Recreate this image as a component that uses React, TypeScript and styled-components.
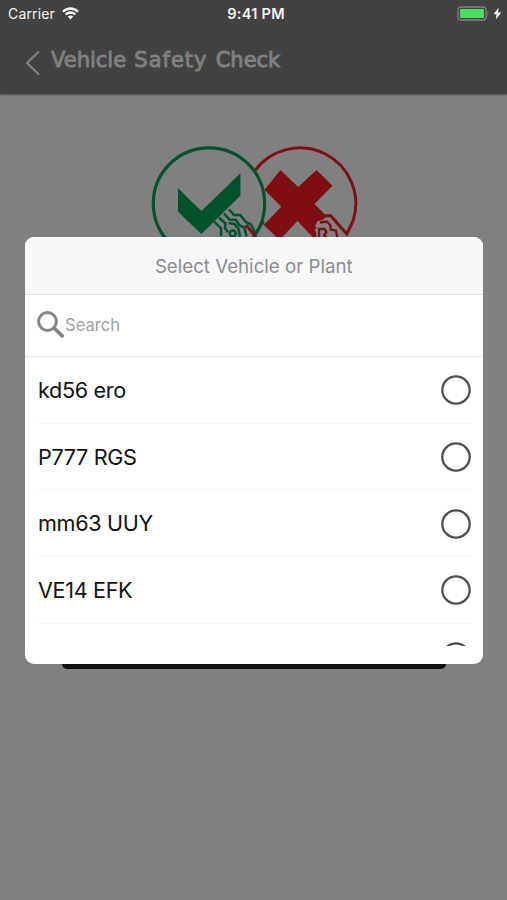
import React from "react";
import styled, { createGlobalStyle } from "styled-components";

const GlobalStyle = createGlobalStyle`
  * { box-sizing: border-box; }
  body { margin: 0; background: #808080; overflow: hidden; font-family: Inter, "Liberation Sans", sans-serif; }
`;

const Screen = styled.div`
  position: relative;
  width: 507px;
  height: 900px;
  overflow: hidden;
  background: #808080;
`;

const TopBar = styled.header`
  height: 94px;
  background: #424242;
  box-shadow: 0 1px 2px rgba(0, 0, 0, 0.4);
`;

const StatusBar = styled.div`
  display: grid;
  grid-template-columns: 1fr auto 1fr;
  align-items: center;
  height: 27px;
  padding: 0 5px 0 8px;
  color: #f4f4f4;
`;

const StatusGroup = styled.div<{ $end?: boolean }>`
  display: flex;
  align-items: center;
  gap: ${(p) => (p.$end ? "3px" : "7px")};
  justify-content: ${(p) => (p.$end ? "flex-end" : "flex-start")};
`;

const Carrier = styled.span`
  font-size: 14px;
  line-height: 18px;
  letter-spacing: 0.15px;
`;

const Clock = styled.time`
  padding-left: 2px;
  font-size: 14.5px;
  font-weight: 600;
  line-height: 18px;
  letter-spacing: 0.3px;
`;

const NavBar = styled.div`
  display: flex;
  align-items: center;
  gap: 10px;
  height: 67px;
  padding: 0 0 0 25px;
`;

const BackIcon = styled.svg`
  margin-top: 4px;
`;

const Title = styled.h1`
  margin: -2px 0 0;
  font: 400 21px/30px "DejaVu Sans", sans-serif;
  color: #808080;
  -webkit-text-stroke: 0.9px #808080;
  white-space: nowrap;
  word-spacing: 1.5px;
`;

const Word = styled.span<{ $spacing: number }>`
  letter-spacing: ${(p) => p.$spacing}px;
`;

const Content = styled.main`
  display: flex;
  flex-direction: column;
  align-items: center;
  padding-top: 50px;
`;

const SubmitButton = styled.button`
  width: 384px;
  height: 50px;
  margin-top: 355px;
  border: 0;
  border-radius: 5px;
  background: #101012;
`;

const Dialog = styled.section`
  position: absolute;
  top: 237px;
  left: 25px;
  display: flex;
  flex-direction: column;
  width: 457.5px;
  height: 427px;
  padding-bottom: 18px;
  overflow: hidden;
  border-radius: 9px;
  background: #fff;
`;

const DialogTitle = styled.h2`
  flex: none;
  height: 58px;
  margin: 0;
  border-bottom: 1px solid #e1e1e5;
  background: #f8f8fb;
  color: #8b8b90;
  font-size: 18.7px;
  font-weight: 400;
  line-height: 59px;
  text-align: center;
`;

const SearchRow = styled.label`
  display: flex;
  flex: none;
  align-items: center;
  height: 62px;
  padding: 0 0 2px 12px;
  border-bottom: 1px solid #e8e8e8;
`;

const SearchInput = styled.input`
  width: 380px;
  padding: 0;
  border: 0;
  outline: 0;
  background: transparent;
  font: 400 16.6px/24px Inter, sans-serif;
  &::placeholder { color: #a2a2a5; opacity: 1; }
`;

const List = styled.div`
  flex: 1;
  min-height: 0;
  overflow: hidden;
`;

const Option = styled.div`
  display: flex;
  align-items: center;
  justify-content: space-between;
  height: 66.7px;
  margin: 0 12px 0 13px;
  border-bottom: 1px solid #f7f7f7;
`;

const OptionLabel = styled.span`
  color: #111;
  font-size: 21.6px;
  line-height: 30px;
  letter-spacing: -0.33px;
`;

const Radio = styled.svg`
  flex: none;
  margin-top: 1px;
`;

const options = ["kd56 ero", "P777 RGS", "mm63 UUY", "VE14 EFK", ""];

const Logo = () => (
  <svg width="211" height="120" viewBox="0 0 211 120" fill="none">
    <g stroke="#7f0e13" strokeWidth="3.2">
      <path d="M174 74l3-2.2 5.5-.3 16.3 18.5 6.2-13A55.8 55.8 0 1 0 112.3 98.9" strokeWidth="3" />
      <path fill="#7f0e13" stroke="none" d="M132.5 26l17.7 17 18.3-17 16 15.7-18 18.3 12 12-4 4-5 1-3 6v12l-17-18-18 19-15.7-15 17.4-18.3-16.7-17z" />
      <path strokeWidth="2.3" d="M172 78.5l7-1 3.5 4v4l5.5 1 1.5 8M168 83l-3 2.5 2 3v6M171 94v-9h5.5l2 3-2.5 3.5 3 3" />
    </g>
    <circle cx="61" cy="59.5" r="55.7" fill="#808080" stroke="#00522b" strokeWidth="3.2" />
    <path fill="#00522b" d="M30 44.3L53.4 67l39-37.7v22.4L53.4 90 30 67.7z" />
    <g stroke="#00522b" strokeWidth="2.5">
      <path d="M81 65.5l5 5.5h6l6.5 7.5 4.5 2 4 8.5 9-11.5" />
      <path d="M76 69.5l5.5 6 6.5.5 3.5 5.5 5 2 2 9" />
      <path d="M71 73.5l6.5 6-.5 4.5 3 4M80.5 79l6 1 4 5 1.5 8" />
      <path d="M66 77.7l7 6.5v8" />
      <circle cx="84.7" cy="89.5" r="3" />
    </g>
    <path d="M98 81l10 12" stroke="#7f0e13" strokeWidth="3" />
  </svg>
);

export default function App() {
  return (
    <>
      <GlobalStyle />
      <Screen>
        <TopBar>
          <StatusBar>
            <StatusGroup>
              <Carrier>Carrier</Carrier>
              <svg width="17" height="13" viewBox="0 0 17 13" fill="none" stroke="#f4f4f4" strokeWidth="2.3">
                <path d="M1 4.7C5.2.4 11.8.4 16 4.7M3.7 7.5c2.7-2.7 6.9-2.7 9.6 0" />
                <path d="M5.7 9.6Q8.5 7.3 11.3 9.6L8.5 12.4z" fill="#f4f4f4" stroke="none" />
              </svg>
            </StatusGroup>
            <Clock>9:41 PM</Clock>
            <StatusGroup $end>
              <svg width="33" height="15" viewBox="0 0 33 15">
                <rect x="1" y="1" width="28" height="13" rx="3" fill="#424242" stroke="#828282" strokeWidth="1.3" />
                <rect x="3" y="3" width="24" height="9" rx="1" fill="#4cdc62" />
                <path d="M30.5 5v5q2-2.5 0-5" fill="#828282" />
              </svg>
              <svg width="9" height="13" viewBox="0 0 9 13">
                <path d="M5.7.5.5 7.2h3L2.8 12.5 8.4 5.5H5z" fill="#f4f4f4" />
              </svg>
            </StatusGroup>
          </StatusBar>
          <NavBar>
            <BackIcon width="16" height="26" viewBox="0 0 16 26" fill="none" stroke="#858585" strokeWidth="2">
              <path d="M14 1.5 2 13l12 11.5" />
            </BackIcon>
            <Title>
              <Word $spacing={0}>Vehicle</Word> <Word $spacing={1}>Safety</Word> <Word $spacing={0}>Check</Word>
            </Title>
          </NavBar>
        </TopBar>
        <Content>
          <Logo />
          <SubmitButton aria-label="Continue" />
        </Content>
        <Dialog>
          <DialogTitle>Select Vehicle or Plant</DialogTitle>
          <SearchRow>
            <svg width="28" height="28" viewBox="0 0 28 28" fill="none" stroke="#858585">
              <circle cx="10.5" cy="10.5" r="8.9" strokeWidth="3" />
              <path d="m17 17 9.3 9" strokeWidth="3.7" />
            </svg>
            <SearchInput placeholder="Search" />
          </SearchRow>
          <List>
            {options.map((label, index) => (
              <Option key={index}>
                <OptionLabel>{label}</OptionLabel>
                <Radio width="30" height="30" viewBox="0 0 30 30" fill="none" stroke="#505050" strokeWidth="2.3">
                  <circle cx="15" cy="15" r="13.7" />
                </Radio>
              </Option>
            ))}
          </List>
        </Dialog>
      </Screen>
    </>
  );
}
